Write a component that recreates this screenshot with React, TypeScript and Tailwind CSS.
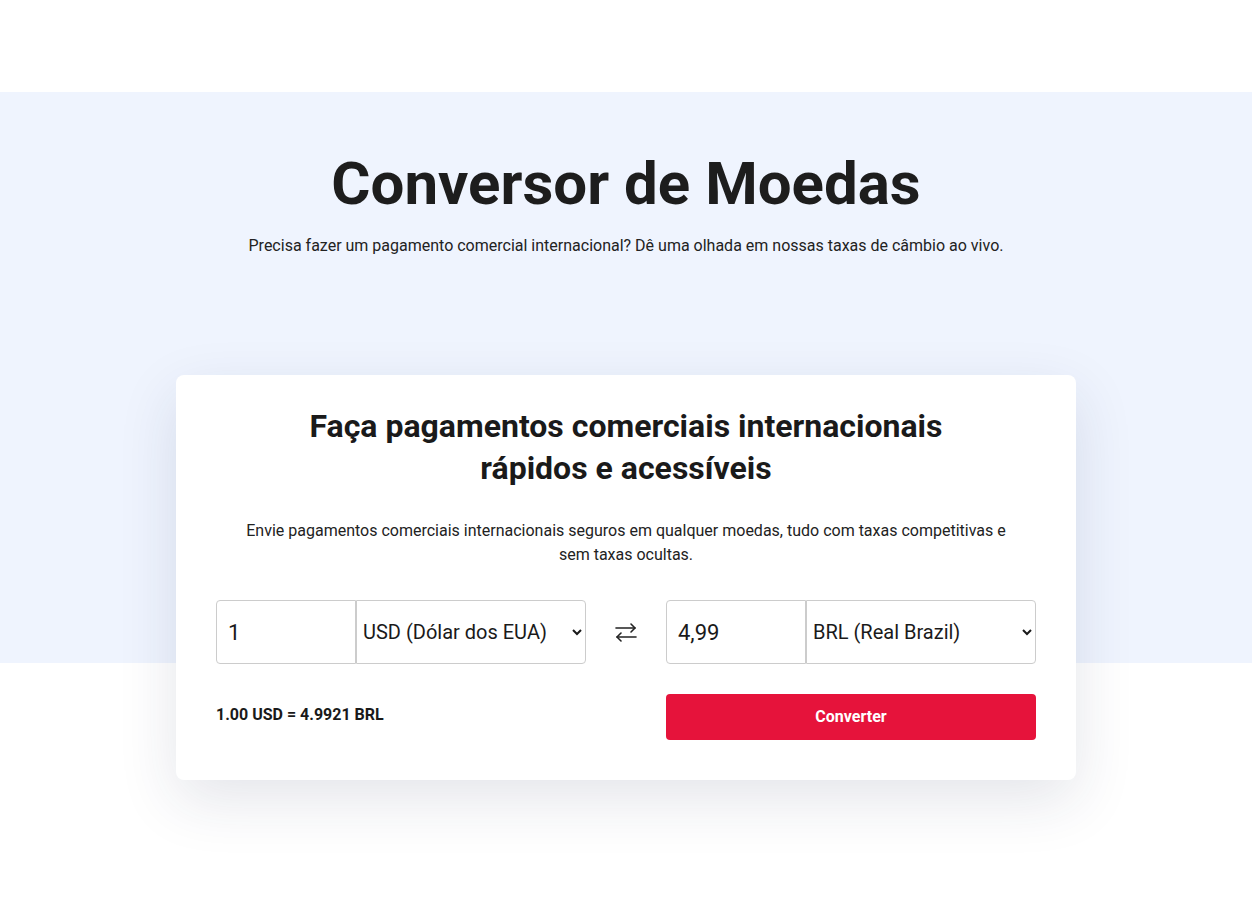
import { useState } from 'react';

function SwapIcon() {
  return (
    <svg width="24" height="20" viewBox="0 0 24 20" fill="none" stroke="#222" strokeWidth="1.6" strokeLinecap="round" strokeLinejoin="round">
      <path d="M2 6h19" />
      <path d="M17 2l4 4-4 4" />
      <path d="M22 15h-19" />
      <path d="M7 11l-4 4 4 4" />
    </svg>
  );
}

function CurrencyField({ amount, currency, options }: { amount: string; currency: string; options: string[] }) {
  const [val, setVal] = useState(amount);
  const [cur, setCur] = useState(currency);
  return (
    <div className="flex h-[64px] w-[370px]">
      <input
        value={val}
        onChange={(e) => setVal(e.target.value)}
        className="w-[140px] h-full border border-[#cccccc] rounded-l-[4px] px-[11px] text-[22px] text-[#1a1a1a] outline-none bg-white"
      />
      <select
        value={cur}
        onChange={(e) => setCur(e.target.value)}
        className="flex-1 h-full border border-[#cccccc] rounded-r-[4px] pl-[2px] pr-[6px] text-[20px] text-[#1a1a1a] bg-white outline-none"
      >
        {options.map((o) => (
          <option key={o}>{o}</option>
        ))}
      </select>
    </div>
  );
}

export default function App() {
  const options = ['USD (Dólar dos EUA)', 'BRL (Real Brazil)', 'EUR (Euro)', 'GBP (Libra Esterlina)'];
  return (
    <div className="min-h-[900px] bg-white font-['Roboto',sans-serif] text-[#1c1c1c]">
      <div className="h-[92px]" />
      <section className="bg-[#eff4fe] h-[571px] pt-[56px] text-center">
        <h1 className="text-[60px] font-bold leading-[72px] text-[#1d1d1d]">Conversor de Moedas</h1>
        <p className="mt-[14px] text-[16px] leading-[24px] text-[#222]">
          Precisa fazer um pagamento comercial internacional? Dê uma olhada em nossas taxas de câmbio ao vivo.
        </p>
      </section>
      <div className="flex justify-center -mt-[288px] pb-[120px]">
        <div className="w-[900px] bg-white rounded-[8px] shadow-[0_20px_60px_rgba(30,40,80,0.12)] px-[40px] pt-[30px] pb-[40px]">
          <h2 className="text-[32px] font-bold leading-[42px] text-center text-[#1a1a1a]">
            Faça pagamentos comerciais internacionais
            <br />
            rápidos e acessíveis
          </h2>
          <p className="mt-[30px] mx-auto max-w-[780px] text-center text-[16px] leading-[24px] text-[#222]">
            Envie pagamentos comerciais internacionais seguros em qualquer moedas, tudo com taxas competitivas e sem taxas ocultas.
          </p>
          <div className="mt-[33px] flex items-center justify-between">
            <CurrencyField amount="1" currency="USD (Dólar dos EUA)" options={options} />
            <div className="w-[80px] flex justify-center">
              <SwapIcon />
            </div>
            <CurrencyField amount="4,99" currency="BRL (Real Brazil)" options={options} />
          </div>
          <div className="mt-[30px] flex items-center justify-between">
            <span className="text-[16px] font-bold text-[#1a1a1a] -mt-[4px]">1.00 USD = 4.9921 BRL</span>
            <button className="w-[370px] h-[46px] rounded-[4px] bg-[#e6133b] text-white font-bold text-[16px]">
              Converter
            </button>
          </div>
        </div>
      </div>
    </div>
  );
}
